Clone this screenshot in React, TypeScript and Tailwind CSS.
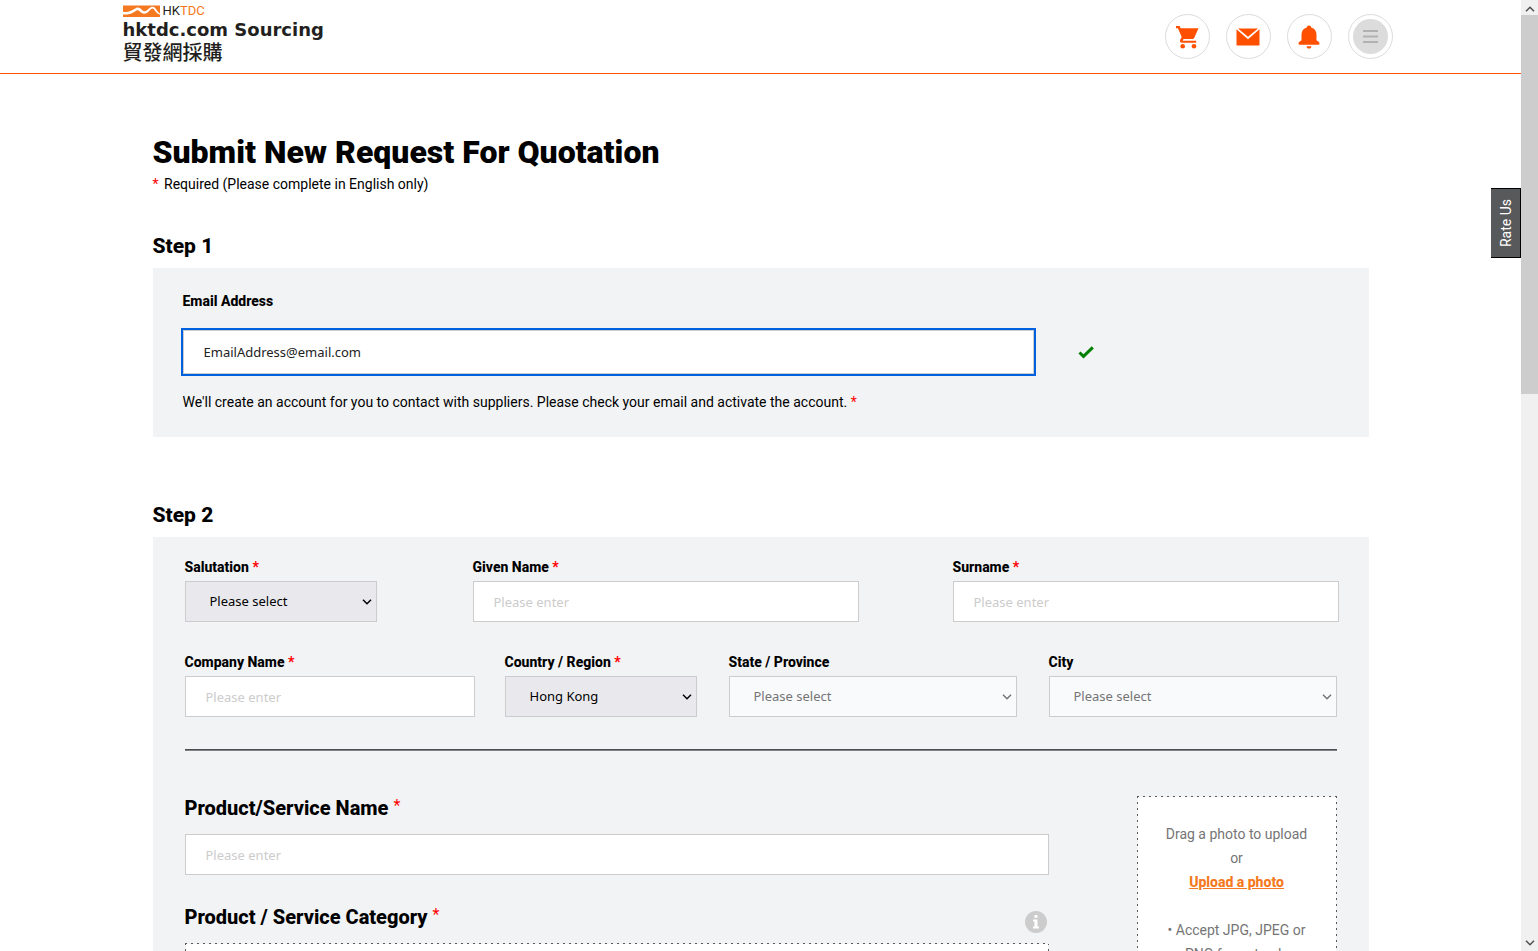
import React, { useState } from "react";

const Star = () => <span className="text-[#ff0000]">*</span>;

const Chevron = () => (
  <svg viewBox="0 0 10 6" className="w-[10px] h-[6px]" fill="none" stroke="currentColor" strokeWidth="1.5">
    <path d="M1 0.8 L5 4.8 L9 0.8" />
  </svg>
);

const Logo = () => (
  <a href="#" className="flex flex-col items-start text-[#231f20]">
    <span className="flex items-center gap-0.5 h-[14px]">
      <svg viewBox="0 0 38 12" className="w-[38px] h-3">
        <rect y="0.5" width="37" height="11.500" fill="#f47920" />
        <path d="M0 6.800 C5 7.600 9 5.800 13 3 C15.500 1.800 17.500 3.400 19.500 5.400 C21.500 7 23.500 6 26 3.600 C28.500 1.200 31 1.200 33 4 C34.500 6.500 36 8.400 38 9 L38 10 C35 9.600 33 7.500 31 4.600 C30 3 28.500 3.200 27 5 C24.500 8.600 21 10 18 7.400 C16.500 6 15.500 4.600 13.500 5.400 C10 8.400 5 9.800 0 9.600 Z" fill="#fff" />
      </svg>
      <span className="font-['Roboto',sans-serif] text-[13px] leading-[14px]">
        HK<span className="text-[#f47920]">TDC</span>
      </span>
    </span>
    <span className="font-['DejaVu_Sans',sans-serif] text-[18px] leading-6 font-bold">hktdc.com Sourcing</span>
    <span className="font-['Noto_Sans_CJK_TC',sans-serif] text-[20px] leading-5 font-medium">貿發網採購</span>
  </a>
);

const CartIcon = () => (
  <svg viewBox="0 0 24 24" className="w-6 h-6" fill="#ff5000">
    <path d="M1 1h3.600l1.100 2.200h17.800l-4.200 9.600c-.4.8-1 1.200-1.800 1.200H8.600l-1 1.700h13.600v2.100H7c-1.700 0-2.600-1.600-1.800-3l1.500-2.700L2.900 3.200H1z" />
    <circle cx="7.700" cy="21.300" r="2.300" />
    <circle cx="19" cy="21.300" r="2.300" />
  </svg>
);

const MailIcon = () => (
  <svg viewBox="0 0 24 18" className="w-6 h-[18px]" fill="#ff5000">
    <path d="M2 0.500h20L12 8.700z" />
    <path d="M0.500 1.300 12 11.300 23.500 1.300V17.500H0.500z" />
  </svg>
);

const BellIcon = () => (
  <svg viewBox="0 0 24 24" className="w-6 h-6" fill="#ff5000">
    <path d="M12 0.500c1.300 0 2.200.9 2.200 2.100 3.400.9 5.300 3.600 5.300 7.100v5.300c0 .9 3 1.600 3 3.400 0 .9-.6 1.400-1.500 1.400H3c-.9 0-1.500-.5-1.500-1.400 0-1.800 3-2.500 3-3.400V9.700c0-3.500 1.900-6.200 5.300-7.100 0-1.200.9-2.100 2.200-2.100z" />
    <path d="M9.600 21.200h4.800c0 1.400-1 2.300-2.400 2.300s-2.400-.9-2.400-2.300z" />
  </svg>
);

const MenuIcon = () => (
  <span className="flex size-[35px] items-center justify-center rounded-full bg-[#dcdcdc]">
    <svg viewBox="0 0 15 13" className="w-[15px] h-[13px]" fill="#b1b1b1">
      <path d="M0 0h15v2H0zM0 5.500h15v2H0zM0 11h15v2H0z" />
    </svg>
  </span>
);

const headerButtons = [
  { label: "Cart", icon: <CartIcon /> },
  { label: "Messages", icon: <MailIcon /> },
  { label: "Notifications", icon: <BellIcon /> },
  { label: "Menu", icon: <MenuIcon /> },
];

const fieldFont = "font-['Noto_Sans',sans-serif] text-[13px]";

// Sparse dashes: 2px on, 4px off, on all four sides
const dashedBox =
  "bg-white bg-[repeating-linear-gradient(90deg,#58595b_0_2px,#f2f3f5_2px_6px),repeating-linear-gradient(90deg,#58595b_0_2px,#f2f3f5_2px_6px),repeating-linear-gradient(#58595b_0_2px,#f2f3f5_2px_6px),repeating-linear-gradient(#58595b_0_2px,#f2f3f5_2px_6px)] [background-size:100%_1px,100%_1px,1px_100%,1px_100%] [background-position:top,bottom,left,right] bg-no-repeat";

type FieldProps = {
  id: string;
  label: string;
  required?: boolean;
};

const TextField = ({ id, label, required }: FieldProps) => (
  <div>
    <label htmlFor={id} className="block text-sm leading-5 font-extrabold">
      {label} {required && <Star />}
    </label>
    <input
      id={id}
      type="text"
      placeholder="Please enter"
      className={`mt-1 block h-[41px] w-[calc(100%+2px)] border border-[#ccc] bg-white px-5 placeholder:text-[#ccc] ${fieldFont}`}
    />
  </div>
);

const SelectField = ({ id, label, required, options, disabled }: FieldProps & { options: string[]; disabled?: boolean }) => (
  <div>
    <label htmlFor={id} className="block text-sm leading-5 font-extrabold">
      {label} {required && <Star />}
    </label>
    <div className="relative mt-1 text-black has-disabled:text-[#757575]">
      <select
        id={id}
        disabled={disabled}
        className={`block h-[41px] w-full appearance-none border border-[#ccc] bg-[#e9e9ed] pl-6 pr-5 opacity-100 disabled:bg-[#f9fafc] ${fieldFont}`}
      >
        {options.map((option) => (
          <option key={option}>{option}</option>
        ))}
      </select>
      <span className="pointer-events-none absolute inset-y-0 right-[5px] flex items-center">
        <Chevron />
      </span>
    </div>
  </div>
);

const App = () => {
  const [email, setEmail] = useState("EmailAddress@email.com");

  return (
    <div className="relative flex h-screen overflow-hidden bg-white font-['Roboto',sans-serif] text-sm text-black">
      <div className="min-w-0 flex-1 overflow-hidden">
        <header className="border-b border-[#ff5000]">
          <div className="mx-auto flex h-[73px] max-w-[1280px] items-start justify-between pl-0.5 pr-2">
            <div className="pt-1">
              <Logo />
            </div>
            <nav className="flex gap-4 pt-[14px]">
              {headerButtons.map((item) => (
                <button
                  key={item.label}
                  aria-label={item.label}
                  className="flex size-[45px] items-center justify-center rounded-full border border-[#dcdcdc]"
                >
                  {item.icon}
                </button>
              ))}
            </nav>
          </div>
        </header>

        <main className="mx-auto max-w-[1216px] pt-[58px]">
          <h1 className="text-[32px] leading-10 font-black">Submit New Request For Quotation</h1>
          <p className="leading-6">
            <span className="mr-0.5 text-[#ff0000]">*</span> Required (Please complete in English only)
          </p>

          <h2 className="mt-9 text-[21px] leading-7 font-extrabold">Step 1</h2>
          <section className="mt-2 bg-[#f2f3f5] pt-[21px] pb-[23px]">
            <label htmlFor="email" className="block px-[30px] leading-6 font-extrabold">
              Email Address
            </label>
            <div className="mt-[17px] flex items-center gap-11">
              <input
                id="email"
                type="email"
                value={email}
                onChange={(e) => setEmail(e.target.value)}
                className={`ml-[30px] h-11 w-[70%] border border-[#ccc] bg-white px-5 text-[#222] outline-2 outline-[#0061e0] ${fieldFont}`}
              />
              <svg viewBox="0 0 16 13" className="w-4 h-[13px]" fill="none" stroke="#008000" strokeWidth="3">
                <path d="M1.500 6.500 5.500 10.300 14.800 1.300" />
              </svg>
            </div>
            <p className="mt-4 px-[30px] leading-6">
              We'll create an account for you to contact with suppliers. Please check your email and activate the
              account. <Star />
            </p>
          </section>

          <h2 className="mt-16 text-[21px] leading-7 font-extrabold">Step 2</h2>
          <section className="mt-2 bg-[#f2f3f5] px-8 pt-5">
            <div className="grid grid-cols-[1fr_2fr_2fr] gap-24">
              <SelectField id="salutation" label="Salutation" required options={["Please select", "Mr", "Ms"]} />
              <TextField id="given" label="Given Name" required />
              <TextField id="surname" label="Surname" required />
            </div>
            <div className="mt-[30px] grid grid-cols-[3fr_2fr_3fr_3fr] gap-8">
              <TextField id="company" label="Company Name" required />
              <SelectField id="country" label="Country / Region" required options={["Hong Kong"]} />
              <SelectField id="state" label="State / Province" options={["Please select"]} disabled />
              <SelectField id="city" label="City" options={["Please select"]} disabled />
            </div>

            <hr className="mt-8 h-0.5 border-t border-b border-t-[#4d4e50] border-b-[#808184]" />

            <div className="mt-[45px] flex justify-between">
              <div className="w-3/4">
                <label htmlFor="product" className="flex gap-[5px] text-xl leading-6 font-extrabold">
                  Product/Service Name <span className="text-base leading-5 font-normal text-[#ff0000]">*</span>
                </label>
                <input
                  id="product"
                  type="text"
                  placeholder="Please enter"
                  className={`mt-[14px] block h-[41px] w-full border border-[#ccc] bg-white px-5 placeholder:text-[#ccc] ${fieldFont}`}
                />
                <div className="mt-[30px] flex h-6 items-start justify-between">
                  <h3 className="flex gap-[5px] text-xl leading-6 font-extrabold">
                    Product / Service Category{" "}
                    <span className="text-base leading-5 font-normal text-[#ff0000]">*</span>
                  </h3>
                  <button aria-label="Category help" className="mt-1.5 mr-0.5">
                    <svg viewBox="0 0 22 22" className="size-[22px]">
                      <circle cx="11" cy="11" r="11" fill="#ccc" />
                      <path d="M9.500 4h3v2.700h-3zM8 8.500h4.500v7H14v2H8v-2h1.500v-5H8z" fill="#fff" />
                    </svg>
                  </button>
                </div>
                <div className={`mt-[14px] h-40 ${dashedBox}`} />
              </div>

              <div className={`w-[200px] px-5 py-[26px] text-center leading-6 text-[#757575] ${dashedBox}`}>
                <p>Drag a photo to upload</p>
                <p>or</p>
                <a href="#" className="font-extrabold text-[#f47920] underline">
                  Upload a photo
                </a>
                <p className="mt-6">• Accept JPG, JPEG or PNG format only</p>
              </div>
            </div>
          </section>
        </main>
      </div>

      {/* Scroll track */}
      <div className="flex w-[17px] flex-col items-center bg-[#f0f0f0] text-[#505050]">
        <span className="flex h-[15px] rotate-180 items-center pb-[3px]">
          <Chevron />
        </span>
        <div className="h-[379px] w-full bg-[#cdcdcd]" />
        <span className="mt-auto flex h-4 items-center">
          <Chevron />
        </span>
      </div>

      <button className="absolute top-[188px] right-[17px] flex h-[70px] w-[30px] items-center justify-center border-y border-r border-black bg-[#58595b] text-white">
        <span className="rotate-180 [writing-mode:vertical-rl]">Rate Us</span>
      </button>
    </div>
  );
};

export default App;
